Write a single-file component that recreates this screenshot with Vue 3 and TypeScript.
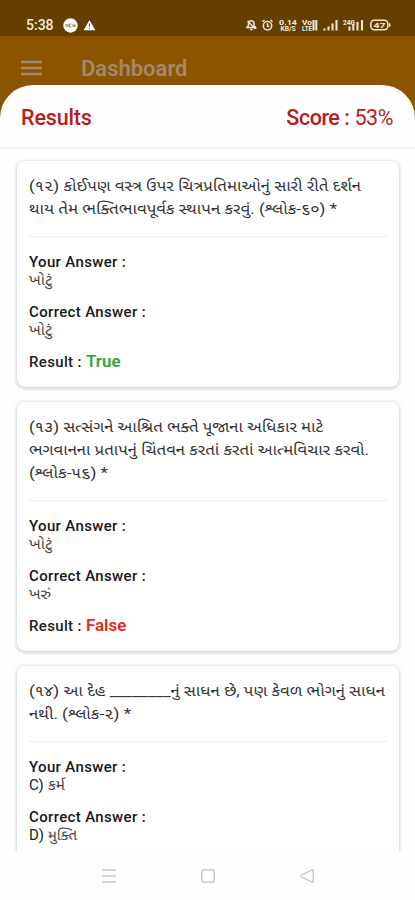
<script setup lang="ts">
interface Line {
  text: string
  width: number
}
interface Answer {
  latin: string
  text: string
  width: number
}
interface Question {
  id: number
  lines: Line[]
  yours: Answer
  correct: Answer
  result?: boolean
}

const questions: Question[] = [
  {
    id: 12,
    lines: [
      { text: '(૧૨) કોઈપણ વસ્ત્ર ઉપર ચિત્રપ્રતિમાઓનું સારી રીતે દર્શન', width: 332 },
      { text: 'થાય તેમ ભક્તિભાવપૂર્વક સ્થાપન કરવું. (શ્લોક-૬૦) *', width: 308 },
    ],
    yours: { latin: '', text: 'ખોટું', width: 23 },
    correct: { latin: '', text: 'ખોટું', width: 23 },
    result: true,
  },
  {
    id: 13,
    lines: [
      { text: '(૧૩) સત્સંગને આશ્રિત ભક્તે પૂજાના અધિકાર માટે', width: 294 },
      { text: 'ભગવાનના પ્રતાપનું ચિંતવન કરતાં કરતાં આત્મવિચાર કરવો.', width: 340 },
      { text: '(શ્લોક-૫૬) *', width: 79 },
    ],
    yours: { latin: '', text: 'ખોટું', width: 23 },
    correct: { latin: '', text: 'ખરું', width: 22 },
    result: false,
  },
  {
    id: 14,
    lines: [
      { text: '(૧૪) આ દેહ ________નું સાધન છે, પણ કેવળ ભોગનું સાધન', width: 356 },
      { text: 'નથી. (શ્લોક-૨) *', width: 102 },
    ],
    yours: { latin: 'C)', text: 'કર્મ', width: 17 },
    correct: { latin: 'D)', text: 'મુક્તિ', width: 29 },
  },
]
</script>

<template>
  <div class="phone">
    <header class="status">
      <div class="status-left">
        <span class="clock">5:38</span>
        <svg class="badge" viewBox="0 0 15 15" width="15" height="15">
          <circle cx="7.5" cy="7.5" r="7.2" fill="#fff" />
          <path d="M3 6v3M3 6l2 3V6M6.5 6v3M8.5 6h-2v3h2M10 6v3l1-2 1 2V6" stroke="#95784d" fill="none" stroke-width=".8" />
        </svg>
        <svg viewBox="0 0 14 12" width="13" height="12">
          <path d="M7 .5 13.3 11.6H.7Z" fill="#fff" />
          <path d="M7 4v4M7 9.2v1.2" stroke="#7b5b2c" stroke-width="1.1" />
        </svg>
      </div>
      <svg class="status-right" viewBox="0 0 146 16" width="146" height="16">
        <g fill="none" stroke="#efe5d5" stroke-width="1.5">
          <path d="M1 10.500h8.500L8 8.500V6a2.800 2.800 0 0 0-5.500 0v2.500ZM4 12.600h2.500M1.500 4l8 8" />
          <circle cx="21.500" cy="8.800" r="4.200" />
          <path d="M21.500 6.300v3h1.800M16.500 4.800l2-1.800M26.500 4.800l-2-1.800" />
          <rect x="124.800" y="3.300" width="17" height="9.400" rx="3.500" />
          <path d="M143.700 6.300v3.500" />
        </g>
        <g class="tiny" fill="#f4ebdd">
          <text x="33" y="7.500" textLength="18" lengthAdjust="spacingAndGlyphs">0.14</text>
          <text x="34.500" y="14" textLength="15" lengthAdjust="spacingAndGlyphs">KB/S</text>
          <text x="56" y="7.800" textLength="10" lengthAdjust="spacingAndGlyphs">Vo</text>
          <text x="56" y="14" textLength="10" lengthAdjust="spacingAndGlyphs">LTE</text>
          <text x="97" y="7.500" textLength="12" lengthAdjust="spacingAndGlyphs">24G</text>
          <text x="127.500" y="11" textLength="12" lengthAdjust="spacingAndGlyphs">47</text>
        </g>
        <path d="M67.500 13.500V3M70.300 13.500V3M78.500 13.500v-2M82.500 13.500v-4M86.500 13.500V6.500M90.500 13.500V3M103.500 13.500v-4M107.300 13.500V8M111.500 13.500V5M116 13.500V3" stroke="#efe5d5" stroke-width="2.100" />
      </svg>
    </header>

    <div class="appbar">
      <svg class="burger" viewBox="0 0 21 16" width="21" height="16">
        <path d="M0 2h21M0 8h21M0 14h21" stroke="#a2896a" stroke-width="2.300" />
      </svg>
      <span class="title">Dashboard</span>
    </div>

    <main class="sheet">
      <div class="sheet-head">
        <h1>Results</h1>
        <p class="score"><b>Score :</b> 53%</p>
      </div>

      <div class="list">
        <article v-for="q in questions" :key="q.id" class="card">
          <div class="question">
            <svg v-for="line in q.lines" :key="line.text" class="line" width="362" height="23">
              <text x="0" y="17" :textLength="line.width" lengthAdjust="spacingAndGlyphs">{{ line.text }}</text>
            </svg>
          </div>
          <section class="answer">
            <h2>Your Answer :</h2>
            <div class="value">
              <span v-if="q.yours.latin" class="letter">{{ q.yours.latin }}</span>
              <svg width="80" height="20">
                <text x="0" y="14" :textLength="q.yours.width" lengthAdjust="spacingAndGlyphs">{{ q.yours.text }}</text>
              </svg>
            </div>
          </section>
          <section class="answer">
            <h2>Correct Answer :</h2>
            <div class="value">
              <span v-if="q.correct.latin" class="letter">{{ q.correct.latin }}</span>
              <svg width="80" height="20">
                <text x="0" y="14" :textLength="q.correct.width" lengthAdjust="spacingAndGlyphs">{{ q.correct.text }}</text>
              </svg>
            </div>
          </section>
          <p v-if="q.result !== undefined" class="result">
            Result :
            <b :class="q.result ? 'right' : 'wrong'">{{ q.result ? 'True' : 'False' }}</b>
          </p>
        </article>
      </div>
    </main>

    <nav class="navbar">
      <svg viewBox="0 0 14 14" width="14" height="14"><path d="M0 1h14M0 7h14M0 13h14" /></svg>
      <svg viewBox="0 0 14 14" width="14" height="14"><rect x=".7" y=".7" width="12.600" height="12.600" rx="2.500" /></svg>
      <svg viewBox="0 0 14 14" width="14" height="14"><path d="M12 .8 1.300 6.200q-1 .8 0 1.600L12 13.200q1.300.3 1.300-1V1.800q0-1.300-1.300-1Z" /></svg>
    </nav>
  </div>
</template>

<style>
body {
  margin: 0;
  background: #fefefe;
}
</style>

<style scoped>
.phone {
  display: flex;
  flex-direction: column;
  height: 900px;
  overflow: hidden;
  background: linear-gradient(#653f00 0 36px, #8b5400 36px 150px, #fefefe 150px);
  font-family: Roboto, "Noto Sans Gujarati", "Noto Sans", sans-serif;
  color: #222;
}
h1, h2, p {
  margin: 0;
}
svg {
  display: block;
  flex: none;
}
.status {
  box-sizing: border-box;
  flex: none;
  height: 36px;
  padding: 14px 23px 0 26px;
  display: flex;
  justify-content: space-between;
  align-items: center;
}
.status-left {
  display: flex;
  align-items: center;
}
.clock {
  width: 37px;
  color: #f4ebdd;
  font-size: 14px;
  font-weight: 500;
  line-height: 22px;
}
.badge {
  margin-right: 5px;
}
.tiny {
  font-size: 7px;
  font-weight: 700;
}
.appbar {
  box-sizing: border-box;
  flex: none;
  height: 49px;
  padding: 15px 21px 0;
  display: flex;
  align-items: center;
  gap: 39px;
  color: #a2896a;
}
.title {
  padding-top: 2px;
  font-size: 22px;
  font-weight: 600;
  line-height: 34px;
}
.sheet {
  flex: none;
  height: 766px;
  overflow: hidden;
  background: #fefefe;
  border-radius: 33px 33px 0 0;
}
.sheet-head {
  box-sizing: border-box;
  height: 64px;
  padding: 3px 22px 0 21px;
  display: flex;
  justify-content: space-between;
  align-items: center;
  border-bottom: 2px solid #f4f4f4;
  color: #b91c1c;
}
.sheet-head h1,
.score {
  font-size: 21.500px;
  font-weight: 500;
  line-height: 30px;
  letter-spacing: -0.15px;
}
.score {
  font-weight: 400;
  letter-spacing: -0.45px;
}
.score b {
  font-weight: 500;
}
.list {
  display: flex;
  flex-direction: column;
  gap: 15px;
  padding: 12px 16px 0 17px;
}
.card {
  box-sizing: border-box;
  padding: 13px 12px 16px;
  border-radius: 8px;
  background: #fff;
  box-shadow: 0 1px 4px rgba(0, 0, 0, 0.27);
}
.question {
  display: flex;
  flex-direction: column;
  padding-bottom: 16px;
  border-bottom: 1px solid #efefef;
  margin-bottom: 16px;
}
.line {
  width: 100%;
  overflow: visible;
  font-size: 15px;
  fill: #333;
}
.answer {
  height: 49.500px;
}
.answer h2 {
  font-size: 15px;
  font-weight: 500;
  line-height: 18px;
  letter-spacing: 0.35px;
  color: #181818;
}
.value {
  display: flex;
  gap: 4px;
  height: 20px;
  font-size: 14px;
  fill: #444;
}
.value svg {
  overflow: visible;
}
.letter {
  line-height: 18px;
  font-size: 15px;
}
.result {
  font-size: 15px;
  line-height: 18px;
  font-weight: 500;
  letter-spacing: 0.35px;
}
.result b {
  font-size: 17px;
  font-weight: 600;
  letter-spacing: 0;
}
.right {
  color: #35a43a;
}
.wrong {
  color: #e52b20;
}
.navbar {
  flex: 1;
  display: flex;
  justify-content: center;
  gap: 85px;
  padding-top: 18px;
  background: #fefefe;
}
.navbar svg {
  fill: none;
  stroke: #c8c8c8;
  stroke-width: 1.4;
}
</style>
